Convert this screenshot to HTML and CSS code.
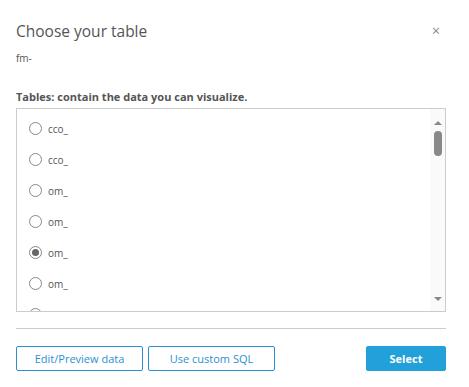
FILE: index.html
```html
<!DOCTYPE html>
<html lang="en">
<head>
  <meta charset="UTF-8">
  <title>Choose your table</title>
  <link rel="stylesheet" href="styles.css">
</head>
<body>
  <div class="dialog">
    <div class="dialog-head">
      <h1>Choose your table</h1>
      <span class="close">&times;</span>
    </div>
    <div class="source">fm-</div>

    <div class="label">Tables: contain the data you can visualize.</div>

    <div class="listbox">
      <div class="options">
        <div class="option"><span class="radio"></span>cco_</div>
        <div class="option"><span class="radio"></span>cco_</div>
        <div class="option"><span class="radio"></span>om_</div>
        <div class="option"><span class="radio"></span>om_</div>
        <div class="option"><span class="radio checked"></span>om_</div>
        <div class="option"><span class="radio"></span>om_</div>
        <div class="option"><span class="radio"></span></div>
      </div>
      <div class="scrollbar">
        <span class="arrow up"></span>
        <span class="thumb"></span>
        <span class="track"></span>
        <span class="arrow down"></span>
      </div>
    </div>

    <div class="divider"></div>

    <div class="actions">
      <button class="btn">Edit/Preview data</button>
      <button class="btn">Use custom SQL</button>
      <button class="btn primary">Select</button>
    </div>
  </div>
</body>
</html>
```

FILE: styles.css
```css
body {
  margin: 0;
  background: #fff;
  font-family: "Open Sans", "Liberation Sans", sans-serif;
  color: #444;
}

.dialog {
  padding: 20px 23px 0 16px;
}

.dialog-head {
  display: flex;
  justify-content: space-between;
  align-items: center;
}

h1 {
  margin: 0;
  font-size: 15.5px;
  font-weight: 400;
  color: #555;
  line-height: 22px;
}

.close {
  font-size: 14px;
  color: #888;
  line-height: 14px;
  margin-right: 6px;
}

.source {
  font-size: 10px;
  margin-top: 9px;
  line-height: 14px;
  color: #555;
}

.label {
  margin-top: 25px;
  font-size: 11px;
  font-weight: 700;
  line-height: 14px;
  color: #555;
}

/* lista de tabelas com barra de rolagem desenhada */
.listbox {
  margin-top: 4px;
  height: 202px;
  border: 1px solid #ccc;
  display: flex;
  overflow: hidden;
}

.options {
  flex: 1;
  padding-top: 4px;
  overflow: hidden;
}

.option {
  height: 31px;
  display: flex;
  align-items: center;
  padding-left: 12px;
  font-size: 10px;
  color: #555;
}

.radio {
  width: 11px;
  height: 11px;
  border: 1px solid #888;
  border-radius: 50%;
  margin-right: 6px;
  display: flex;
  align-items: center;
  justify-content: center;
}

.radio.checked::after {
  content: '';
  width: 7px;
  height: 7px;
  border-radius: 50%;
  background: #666;
}

.scrollbar {
  width: 15px;
  background: #fafafa;
  display: flex;
  flex-direction: column;
  align-items: center;
}

.arrow {
  width: 0;
  height: 0;
  border-left: 4px solid transparent;
  border-right: 4px solid transparent;
}

.arrow.up {
  margin-top: 12px;
  border-bottom: 4px solid #888;
}

.arrow.down {
  margin-bottom: 10px;
  border-top: 4px solid #888;
}

.thumb {
  margin-top: 6px;
  width: 8px;
  height: 25px;
  border-radius: 4px;
  background: #888;
}

.track {
  flex: 1;
}

.divider {
  margin-top: 16px;
  border-top: 1px solid #ccc;
}

.actions {
  display: flex;
  gap: 5px;
  margin-top: 17px;
}

.btn {
  height: 25px;
  width: 127px;
  padding: 0;
  background: #fff;
  border: 1px solid #2b90d0;
  border-radius: 2px;
  color: #2b90d0;
  font-family: inherit;
  font-size: 11px;
}

.btn.primary {
  margin-left: auto;
  width: 80px;
  background: #22a0d9;
  border-color: #22a0d9;
  color: #fff;
  font-weight: 700;
}
```
